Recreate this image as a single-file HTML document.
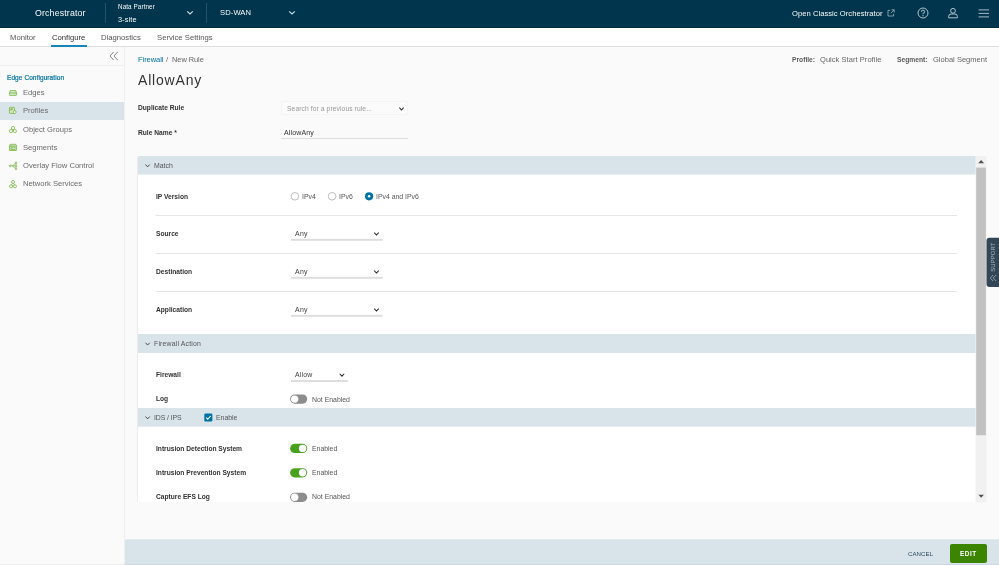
<!DOCTYPE html>
<html lang="en">
<head>
<meta charset="utf-8">
<title>Orchestrator - New Rule</title>
<style>
*{box-sizing:border-box;margin:0;padding:0}
html,body{width:999px;height:565px;overflow:hidden;background:#fafafa;font-family:"Liberation Sans",sans-serif;color:#565656;font-size:7.5px}
.abs,.t{position:absolute;white-space:nowrap}
.t{will-change:transform}
.t{line-height:10px;height:10px}
#hdr{position:absolute;left:0;top:0;width:999px;height:28px;background:#00364d;border-bottom:1px solid #002b3f}
#hdr .t{color:#fafafa}
.vd{position:absolute;top:3px;width:1px;height:20px;background:#24526a}
#tabs{position:absolute;left:0;top:28px;width:999px;height:19px;background:#fff;border-bottom:1px solid #dedede}
#tabs .t{font-size:7.7px;color:#565656;top:4.5px}
#side{position:absolute;left:0;top:47px;width:125px;height:518px;background:#fafafa;border-right:1px solid #efefef}
#side .it{position:absolute;left:0;width:124px;height:18px}
#side .it .t{left:23.2px;top:4px;font-size:7.6px;color:#6a6a6a}
.ic{position:absolute;left:8px;width:10px;height:10px}
.ic *{stroke:#66aa2a;stroke-width:.65;fill:none}
.ic .f{fill:#d3e9c3}
.ic .w{fill:#f3f9ee}
#main{position:absolute;left:125px;top:47px;width:874px;height:518px;background:#fafafa}
.b{font-weight:bold;color:#313131}
#panel{position:absolute;left:137px;top:156px;width:839px;height:346px;background:#fff;border-left:1px solid #ececec}
.sec{position:absolute;left:137.5px;width:838px;background:#d9e4ea}
.sh{font-size:6.9px;color:#565656}
.hr{position:absolute;left:18px;width:802px;height:1px;background:#e4e4e4}
.lbl{font-size:6.65px;font-weight:bold;color:#313131}
.val{font-size:6.9px;color:#565656}
.sel{position:absolute;height:1px;background:#b3b3b3}
.tg{position:absolute;width:17px;height:9px;border-radius:5px}
.tg i{position:absolute;top:1px;width:7px;height:7px;border-radius:50%;background:#fff}
.tg.off{background:#8c8c8c}.tg.off i{left:1px}
.tg.on{background:#42a015}.tg.on i{right:1px}
.radio{position:absolute;width:8px;height:8px;border-radius:50%;border:1px solid #8c8c8c;background:#fff}
#foot{position:absolute;left:125px;top:540px;width:874px;height:25px;background:#d9e4ea}
</style>
</head>
<body>
<div id="hdr">
  <div class="t" style="left:34.7px;top:8.3px;font-size:8.8px;letter-spacing:.15px">Orchestrator</div>
  <div class="vd" style="left:105px"></div>
  <div class="t" style="left:118px;top:2px;font-size:6.3px;letter-spacing:.1px">Nata Partner</div>
  <div class="t" style="left:118px;top:14.6px;font-size:7.4px;letter-spacing:.1px">3-site</div>
  <svg class="abs" style="left:186px;top:10px;width:8px;height:6px" viewBox="0 0 8 6"><path d="M1.2 1.4 L4 4 L6.8 1.4" fill="none" stroke="#d0dce2" stroke-width="1.2"/></svg>
  <div class="vd" style="left:206px"></div>
  <div class="t" style="left:219.5px;top:8.4px;font-size:7.6px;letter-spacing:.1px">SD-WAN</div>
  <svg class="abs" style="left:287.6px;top:10px;width:8px;height:6px" viewBox="0 0 8 6"><path d="M1.2 1.4 L4 4 L6.8 1.4" fill="none" stroke="#d0dce2" stroke-width="1.2"/></svg>
  <div class="t" style="left:791.5px;top:8.9px;font-size:7.6px;letter-spacing:.04px">Open Classic Orchestrator</div>
  <svg class="abs" style="left:887.3px;top:9.2px;width:8px;height:8px" viewBox="0 0 8 8"><path d="M3.2 1.4 H1 V7 H6.6 V4.8 M4.6 .8 H7.2 V3.4 M7.2 .8 L3.8 4.2" fill="none" stroke="#9fb4bf" stroke-width=".8"/></svg>
  <svg class="abs" style="left:916.9px;top:7.4px;width:12px;height:12px" viewBox="0 0 12 12"><circle cx="6" cy="6" r="5" fill="none" stroke="#c3d0d7" stroke-width=".9"/><path d="M4.4 4.8 A1.6 1.6 0 1 1 6 6.3 V7.2" fill="none" stroke="#c3d0d7" stroke-width=".9"/><circle cx="6" cy="8.7" r=".6" fill="#c3d0d7"/></svg>
  <svg class="abs" style="left:947.1px;top:7.4px;width:12px;height:12px" viewBox="0 0 12 12"><circle cx="6" cy="3.8" r="2.4" fill="none" stroke="#c3d0d7" stroke-width=".9"/><path d="M1.6 10.8 V9.6 A2.6 2.6 0 0 1 4.2 7 H7.8 A2.6 2.6 0 0 1 10.4 9.6 V10.8 Z" fill="none" stroke="#c3d0d7" stroke-width=".9"/></svg>
  <svg class="abs" style="left:978px;top:8px;width:12px;height:10px" viewBox="0 0 12 10"><path d="M.6 1.9 H11 M.6 5.4 H11 M.6 8.9 H11" stroke="#c3d0d7" stroke-width=".85" fill="none"/></svg>
</div>

<div id="tabs">
  <div class="t" style="left:10.4px">Monitor</div>
  <div class="t" style="left:52px;color:#313131">Configure</div>
  <div class="abs" style="left:51px;top:17px;width:36px;height:2px;background:#1a84b8"></div>
  <div class="t" style="left:101.3px">Diagnostics</div>
  <div class="t" style="left:156.6px">Service Settings</div>
</div>

<div id="side">
  <svg class="abs" style="left:109px;top:4px;width:10px;height:10px" viewBox="0 0 10 10"><path d="M4.6 1 L1 5 L4.6 9 M8.6 1 L5 5 L8.6 9" fill="none" stroke="#6a6a6a" stroke-width=".8"/></svg>
  <div class="abs" style="left:0;top:18px;width:124px;height:1px;background:#efefef"></div>
  <div class="t" style="left:6.5px;top:25.5px;font-size:6.5px;color:#0072a3;letter-spacing:.08px;-webkit-text-stroke:.2px #0072a3">Edge Configuration</div>
  <div class="it" style="top:37px"><div class="t">Edges</div></div>
  <div class="it" style="top:55px;background:#d9e4ea"><div class="t">Profiles</div></div>
  <div class="it" style="top:74px"><div class="t">Object Groups</div></div>
  <div class="it" style="top:92px"><div class="t">Segments</div></div>
  <div class="it" style="top:109.5px"><div class="t">Overlay Flow Control</div></div>
  <div class="it" style="top:128px"><div class="t">Network Services</div></div>
  <svg class="ic" style="top:42px" viewBox="0 0 10 10"><path class="f" d="M2.3 1.5 H7.7 L8.55 3.7 V5.9 Q8.55 6.4 8 6.4 H2 Q1.45 6.4 1.45 5.9 V3.7 Z"/><path d="M1.5 3.9 H8.5"/></svg>
  <svg class="ic" style="top:59px" viewBox="0 0 10 10"><rect class="f" x="1.45" y="1.35" width="5.1" height="6.1" rx=".7"/><path d="M2.8 4.4 V2.7 H4.4 V3.8 H2.8"/><circle class="w" cx="6.7" cy="6.1" r="1.45"/></svg>
  <svg class="ic" style="top:78px" viewBox="0 0 10 10"><circle class="w" cx="4.95" cy="3" r="1.65"/><circle class="w" cx="3.05" cy="6.1" r="1.6"/><circle class="w" cx="6.9" cy="6.1" r="1.6"/></svg>
  <svg class="ic" style="top:96px" viewBox="0 0 10 10"><path class="f" d="M2.2 1.3 H7.8 L8.55 2.9 V7 Q8.55 7.5 8 7.5 H2 Q1.45 7.5 1.45 7 V2.9 Z"/><path d="M1.5 3.1 H8.5"/><path class="w" d="M3 4.2 H7 V6.5 H3 Z"/><path d="M3.2 6.3 L4.6 5 L5.4 5.8"/></svg>
  <svg class="ic" style="top:114px" viewBox="0 0 10 10"><circle cx="2.2" cy="4.85" r=".95"/><path d="M3.2 4.85 H7 M4.6 4.85 L7.1 2.3 M4.6 4.85 L7.1 7.4 M8 2.6 V3.9 M8 5.8 V7.1"/><circle cx="8" cy="1.8" r=".8"/><circle cx="8" cy="4.85" r=".9"/><circle cx="8" cy="7.9" r=".8"/></svg>
  <svg class="ic" style="top:132px" viewBox="0 0 10 10"><circle class="w" cx="5" cy="2.9" r="1.55"/><circle class="w" cx="3.05" cy="7.3" r="1.55"/><circle class="w" cx="6.95" cy="7.3" r="1.55"/><path d="M4.4 4.4 L3.6 5.8 M5.6 4.4 L6.4 5.8 M4.6 7.3 H5.4"/></svg>
</div>

<div id="main"></div>

<div class="t" style="left:137.5px;top:54.5px;font-size:7.5px;color:#0072a3;letter-spacing:-.05px">Firewall</div>
<div class="t" style="left:165.8px;top:54.5px;font-size:7.6px;color:#666">/</div>
<div class="t" style="left:171.7px;top:54.5px;font-size:7.4px;color:#666;letter-spacing:-.03px">New Rule</div>
<div class="t" style="left:138px;top:70px;height:20px;line-height:20px;font-size:14px;color:#333;letter-spacing:.82px">AllowAny</div>

<div class="t b" style="left:792px;top:55px;font-size:6.7px;color:#5a5a5a">Profile:</div>
<div class="t" style="left:820px;top:54.5px;font-size:7.5px;color:#666;letter-spacing:.05px">Quick Start Profile</div>
<div class="t b" style="left:896.7px;top:55px;font-size:6.7px;color:#5a5a5a">Segment:</div>
<div class="t" style="left:932.5px;top:54.5px;font-size:7.5px;color:#666;letter-spacing:.02px">Global Segment</div>

<div class="t b" style="left:137.5px;top:102.5px;font-size:6.65px">Duplicate Rule</div>
<div class="abs" style="left:281px;top:101px;width:127px;height:14px;border:1px solid #f4f4f4;border-radius:2px;background:#fbfbfb"></div>
<div class="t" style="left:287.3px;top:103.6px;font-size:6.7px;color:#9a9a9a;letter-spacing:.1px">Search for a previous rule...</div>
<svg class="abs" style="left:398px;top:106px;width:7px;height:6px" viewBox="0 0 7 6"><path d="M1.4 1.7 L3.5 4 L5.6 1.7" fill="none" stroke="#2a2a2a" stroke-width="1.05"/></svg>

<div class="t b" style="left:137.5px;top:128px;font-size:6.65px">Rule Name *</div>
<div class="t" style="left:284px;top:127.5px;font-size:7px;color:#313131;letter-spacing:.15px">AllowAny</div>
<div class="sel" style="left:281px;top:138px;width:127px;background:#dedede"></div>

<div id="panel"></div>
<div class="sec" style="top:156px;height:18px;border-bottom:1px solid #e9f0f3;box-sizing:content-box;border-radius:1.5px 0 0 0"></div>
<div class="sec" style="top:334px;height:19px"></div>
<div class="sec" style="top:408px;height:18px;border-bottom:1px solid #e5edf1;box-sizing:content-box"></div>
<div class="t sh" style="left:153.5px;top:160.5px">Match</div>
<div class="t sh" style="left:153.5px;top:338.5px;letter-spacing:.17px">Firewall Action</div>
<div class="t sh" style="left:153.5px;top:412.5px;letter-spacing:-.1px">IDS / IPS</div>
<div class="t sh" style="left:215.5px;top:412.5px">Enable</div>
<div class="t lbl" style="left:155.5px;top:192px">IP Version</div>
<div class="t val" style="left:302px;top:192px">IPv4</div>
<div class="t val" style="left:339px;top:192px">IPv6</div>
<div class="t val" style="left:376px;top:192px">IPv4 and IPv6</div>
<div class="t lbl" style="left:155.5px;top:228.5px">Source</div>
<div class="t val" style="left:295px;top:228.5px;letter-spacing:.3px;color:#3a3a3a">Any</div>
<div class="t lbl" style="left:155.5px;top:266.5px">Destination</div>
<div class="t val" style="left:295px;top:266.5px;letter-spacing:.3px;color:#3a3a3a">Any</div>
<div class="t lbl" style="left:155.5px;top:304.5px">Application</div>
<div class="t val" style="left:295px;top:304.5px;letter-spacing:.3px;color:#3a3a3a">Any</div>
<div class="t lbl" style="left:155.5px;top:369.5px">Firewall</div>
<div class="t val" style="left:295px;top:369.5px;letter-spacing:.2px;color:#3a3a3a">Allow</div>
<div class="t lbl" style="left:155.5px;top:394px">Log</div>
<div class="t val" style="left:311.7px;top:395px">Not Enabled</div>
<div class="t lbl" style="left:155.5px;top:444px">Intrusion Detection System</div>
<div class="t val" style="left:311.5px;top:444px">Enabled</div>
<div class="t lbl" style="left:155.5px;top:467.5px">Intrusion Prevention System</div>
<div class="t val" style="left:311.5px;top:467.5px">Enabled</div>
<div class="t lbl" style="left:155.5px;top:492px">Capture EFS Log</div>
<div class="t val" style="left:311.5px;top:492px">Not Enabled</div>
<svg class="abs" style="left:0;top:0;width:999px;height:565px;pointer-events:none" viewBox="0 0 999 565">
<rect x="155.5" y="215" width="801.5" height="1" fill="#e6e6e6"/>
<rect x="155.5" y="253" width="801.5" height="1" fill="#e6e6e6"/>
<rect x="155.5" y="291" width="801.5" height="1" fill="#e6e6e6"/>
<path d="M145.5 164.55 L147.6 166.90 L149.7 164.55" fill="none" stroke="#4d4d4d" stroke-width="1"/>
<path d="M145.5 342.75 L147.6 345.10 L149.7 342.75" fill="none" stroke="#4d4d4d" stroke-width="1"/>
<path d="M145.5 416.55 L147.6 418.90 L149.7 416.55" fill="none" stroke="#4d4d4d" stroke-width="1"/>
<circle cx="294.9" cy="196.3" r="3.8" fill="#fff" stroke="#969696" stroke-width=".6"/>
<circle cx="332.1" cy="196.3" r="3.8" fill="#fff" stroke="#969696" stroke-width=".6"/>
<circle cx="369.1" cy="196.3" r="4.1" fill="#0072a3"/><circle cx="369.1" cy="196.3" r="1.2" fill="#fff"/>
<rect x="291" y="238.85" width="91.6" height="1.9" fill="#dddddd"/>
<path d="M374.20 232.55 L376.45 235.00 L378.70 232.55" fill="none" stroke="#2a2a2a" stroke-width="1.05"/>
<rect x="291" y="276.85" width="91.6" height="1.9" fill="#dddddd"/>
<path d="M374.20 270.55 L376.45 273.00 L378.70 270.55" fill="none" stroke="#2a2a2a" stroke-width="1.05"/>
<rect x="291" y="314.85" width="91.6" height="1.9" fill="#dddddd"/>
<path d="M374.20 308.55 L376.45 311.00 L378.70 308.55" fill="none" stroke="#2a2a2a" stroke-width="1.05"/>
<rect x="291" y="380.05" width="56.8" height="1.9" fill="#dddddd"/>
<path d="M339.70 373.75 L341.95 376.20 L344.20 373.75" fill="none" stroke="#2a2a2a" stroke-width="1.05"/>
<rect x="290.1" y="394.50" width="17.1" height="9.2" rx="4.6" fill="#8c8c8c"/>
<circle cx="294.70" cy="399.10" r="3.7" fill="#fff"/>
<rect x="290.1" y="443.80" width="17.1" height="9.2" rx="4.6" fill="#48a11c"/>
<circle cx="302.60" cy="448.40" r="3.7" fill="#fff"/>
<rect x="290.1" y="468.20" width="17.1" height="9.2" rx="4.6" fill="#48a11c"/>
<circle cx="302.60" cy="472.80" r="3.7" fill="#fff"/>
<rect x="290.1" y="492.70" width="17.1" height="9.2" rx="4.6" fill="#8c8c8c"/>
<circle cx="294.70" cy="497.30" r="3.7" fill="#fff"/>
<rect x="204.3" y="413.5" width="8.1" height="8.1" rx="1.3" fill="#0072a3"/>
<path d="M206.2 417.6 L207.8 419.2 L210.6 416" fill="none" stroke="#fff" stroke-width="1.1"/>
</svg>

<!-- scrollbar + support tab -->
<svg class="abs" style="left:0;top:0;width:999px;height:565px" viewBox="0 0 999 565">
<rect x="975.5" y="156" width="10.9" height="346.3" fill="#f1f1f1"/>
<rect x="976.2" y="167.6" width="9.7" height="267.6" fill="#c1c1c1"/>
<path d="M978.2 163.3 L981.15 160.1 L984.1 163.3 Z" fill="#505050"/>
<path d="M978.4 494.8 L981.15 497.8 L983.9 494.8 Z" fill="#505050"/>
<path d="M999 237.8 H989.5 Q986.5 237.8 986.5 240.8 V283.9 Q986.5 286.9 989.5 286.9 H999 Z" fill="#324655"/>
<text transform="translate(995 271.7) rotate(-90)" font-family="Liberation Sans, sans-serif" font-size="6" fill="#aab8c2" letter-spacing=".05" text-rendering="geometricPrecision">SUPPORT</text>
<path d="M993.2 275 L990.2 278 L993.2 281 M996.2 275 L993.2 278 L996.2 281" fill="none" stroke="#8e9fab" stroke-width=".9"/>
</svg>

<div id="foot"></div>
<div class="abs" style="left:125px;top:539px;width:874px;height:1px;background:#e4ebef"></div>
<div class="t" style="left:908.2px;top:548.5px;font-size:6.1px;color:#2c4a5e;letter-spacing:.06px;font-weight:normal">CANCEL</div>
<div class="abs" style="left:950px;top:544px;width:37px;height:19px;background:#3c8500;border-radius:2px"></div>
<div class="t" style="left:959.9px;top:549px;font-size:6.4px;color:#fff;letter-spacing:.55px;font-weight:bold">EDIT</div>
<div class="abs" style="left:0;top:564px;width:999px;height:1px;background:rgba(0,0,0,.055)"></div>
</body>
</html>
